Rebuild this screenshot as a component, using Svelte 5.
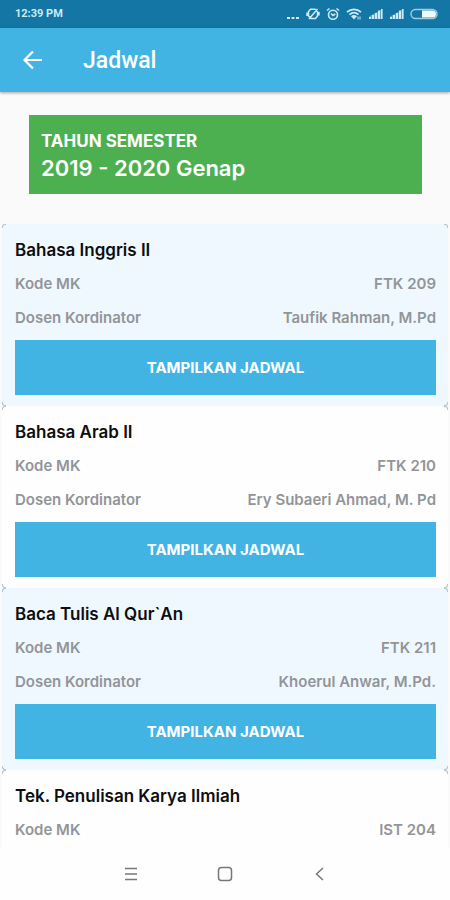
<script>
  let title = 'Jadwal';
  let semester = '2019 - 2020 Genap';

  let courses = [
    { name: 'Bahasa Inggris II', code: 'FTK 209', lecturer: 'Taufik Rahman, M.Pd' },
    { name: 'Bahasa Arab II', code: 'FTK 210', lecturer: 'Ery Subaeri Ahmad, M. Pd' },
    { name: 'Baca Tulis Al Qur`An', code: 'FTK 211', lecturer: 'Khoerul Anwar, M.Pd.' },
    { name: 'Tek. Penulisan Karya Ilmiah', code: 'IST 204' },
  ];
</script>

<div class="screen">
  <div class="status">
    <span>12:39 PM</span>
    <div class="status-icons">
      <svg width="14" height="14" viewBox="0 0 14 14">
        <path d="M1 10h3v2H1zM5.500 10h3v2h-3zM10 10h3v2h-3z" fill="currentColor" />
      </svg>
      <!-- vibrate / silent -->
      <svg width="14" height="14" viewBox="0 0 14 14" fill="none" stroke="currentColor" stroke-width="1.500">
        <path d="M4.500 2.200h4.500l2.500 2.300v4.500l-2 2.500H5l-2.500-2.500V4.500zM3 12L11.500 2M1 5.500v3.500M13 5v3.500" />
      </svg>
      <!-- alarm -->
      <svg width="14" height="14" viewBox="0 0 14 14" fill="none" stroke="currentColor" stroke-width="1.600">
        <circle cx="7" cy="7.800" r="4.500" />
        <path d="M1 3.500L3.500 1.500M13 3.500L10.500 1.500M5 6.500l2 2 2.300-1.500" />
      </svg>
      <!-- wifi -->
      <svg width="16" height="14" viewBox="0 0 16 14" fill="none" stroke="currentColor" stroke-width="1.800">
        <path d="M1 5.200c4-3.800 10-3.800 14 0M3.500 7.600c2.700-2.400 6.300-2.400 9 0" />
        <path d="M5 9.200c2-1.700 4-1.700 6 0L8 12.500z" fill="currentColor" stroke="none" />
        <path d="M12 9.500v3M14 9.500v3" stroke-width="1" />
      </svg>
      {#each [1, 2] as sim}
        <svg width="15" height="14" viewBox="0 0 15 14" fill="currentColor">
          <path d="M1 10h2v2H1zM4 8h2v4H4zM7 6h2v6H7zM10 3.500h2V12h-2zM13 2h1.500v10H13z" />
          <path d="M1 12V9.500L14.500 2v10z" opacity=".4" />
        </svg>
      {/each}
      <!-- battery -->
      <svg width="28" height="14" viewBox="0 0 28 14">
        <rect x="1" y="2.500" width="26" height="9" rx="4.500" fill="none" stroke="currentColor" stroke-width="1.400" opacity=".75" />
        <path d="M12 3.500h10.500a3.500 3.500 0 0 1 0 7H12z" fill="#eef9fd" />
      </svg>
    </div>
  </div>

  <header>
    <button class="back" aria-label="Kembali">
      <svg width="24" height="24" viewBox="0 0 24 24" fill="none" stroke="currentColor" stroke-width="2.200">
        <path d="M21 12H4M12 3.500L3.500 12l8.500 8.500" />
      </svg>
    </button>
    <h1>{title}</h1>
  </header>

  <main>
    <section class="semester">
      <p class="label">TAHUN SEMESTER</p>
      <p class="value">{semester}</p>
    </section>

    {#each courses as course}
      <article class="card">
        <!-- rounded border shows only at the corners -->
        <i class="corner tl"></i><i class="corner tr"></i>
        <i class="corner bl"></i><i class="corner br"></i>
        <h2>{course.name}</h2>
        <dl>
          <div class="row">
            <dt>Kode MK</dt>
            <dd>{course.code}</dd>
          </div>
          {#if course.lecturer}
            <div class="row">
              <dt>Dosen Kordinator</dt>
              <dd>{course.lecturer}</dd>
            </div>
          {/if}
        </dl>
        {#if course.lecturer}
          <button class="show">TAMPILKAN JADWAL</button>
        {/if}
      </article>
    {/each}
  </main>

  <nav>
    <button aria-label="Menu">
      <svg width="16" height="16" viewBox="0 0 16 16" fill="none" stroke="currentColor" stroke-width="1.500">
        <path d="M2 2.500h12M2 8h12M2 13.500h12" />
      </svg>
    </button>
    <button aria-label="Beranda">
      <svg width="16" height="16" viewBox="0 0 16 16" fill="none" stroke="currentColor" stroke-width="1.500">
        <rect x="1.500" y="1.500" width="13" height="13" rx="3" />
      </svg>
    </button>
    <button aria-label="Kembali">
      <svg width="16" height="16" viewBox="0 0 16 16" fill="none" stroke="currentColor" stroke-width="1.500">
        <path d="M12 2L5.500 8l6.500 6" />
      </svg>
    </button>
  </nav>
</div>

<style>
  :global(body) {
    margin: 0;
  }

  .screen {
    display: flex;
    flex-direction: column;
    height: 100vh;
    background: #fafafa;
    font-family: Inter, "Liberation Sans", sans-serif;
  }

  button {
    display: flex;
    align-items: center;
    justify-content: center;
    padding: 0;
    border: none;
    background: none;
    color: inherit;
    font-family: inherit;
    cursor: pointer;
  }

  h1,
  h2,
  p,
  dl,
  dd {
    margin: 0;
  }

  .status {
    display: flex;
    flex: none;
    align-items: center;
    justify-content: space-between;
    height: 28px;
    padding: 0 12px 0 15px;
    background: #1376a4;
    color: #cdeaf5;
    font: 700 11px/28px Roboto, sans-serif;
  }

  .status-icons {
    display: flex;
    align-items: center;
    gap: 6px;
  }

  header {
    display: flex;
    flex: none;
    align-items: center;
    gap: 38px;
    height: 64px;
    padding: 0 21px;
    background: #42b4e4;
    color: #fff;
    box-shadow: 0 1px 3px rgba(0, 0, 0, 0.35);
    z-index: 1;
  }

  h1 {
    padding-top: 2px;
    font: 500 23px/28px Roboto, sans-serif;
  }

  main {
    flex: 1;
    min-height: 0;
    overflow-y: auto;
    scrollbar-width: none;
  }

  .semester {
    margin: 23px 28px 30px 29px;
    padding: 13px 12px 11px;
    background: #4caf50;
    color: #fff;
  }

  .label {
    font-size: 17px;
    font-weight: 700;
    line-height: 26px;
  }

  .value {
    font-size: 22px;
    font-weight: 600;
    line-height: 29px;
  }

  .card {
    position: relative;
    margin: 0 2px;
    padding: 14px 12px 11px 13px;
    background: #fefefe;
  }

  .card:nth-of-type(odd) {
    background: #f0f8ff;
  }

  .corner {
    position: absolute;
    width: 3px;
    height: 3px;
    border: 0 solid #b4c6cd;
  }

  .tl {
    top: 0;
    left: 0;
    border-width: 1px 0 0 1px;
    border-top-left-radius: 3px;
  }

  .tr {
    top: 0;
    right: 0;
    border-width: 1px 1px 0 0;
    border-top-right-radius: 3px;
  }

  .bl {
    bottom: 0;
    left: 0;
    border-width: 0 0 1px 1px;
    border-bottom-left-radius: 3px;
  }

  .br {
    bottom: 0;
    right: 0;
    border-width: 0 1px 1px 0;
    border-bottom-right-radius: 3px;
  }

  h2 {
    color: #0c0e10;
    font-size: 17px;
    font-weight: 600;
    line-height: 24px;
  }

  dl {
    margin: 5px 0;
  }

  .row {
    display: flex;
    justify-content: space-between;
    color: #929598;
    font-size: 15px;
    font-weight: 600;
    line-height: 34px;
  }

  .show {
    width: 100%;
    height: 55px;
    background: #42b4e4;
    color: #fff;
    font-size: 15px;
    font-weight: 700;
  }

  nav {
    display: flex;
    flex: none;
    justify-content: center;
    gap: 50px;
    height: 52px;
    background: #fefefe;
    color: #777;
  }

  nav button {
    width: 44px;
  }
</style>
